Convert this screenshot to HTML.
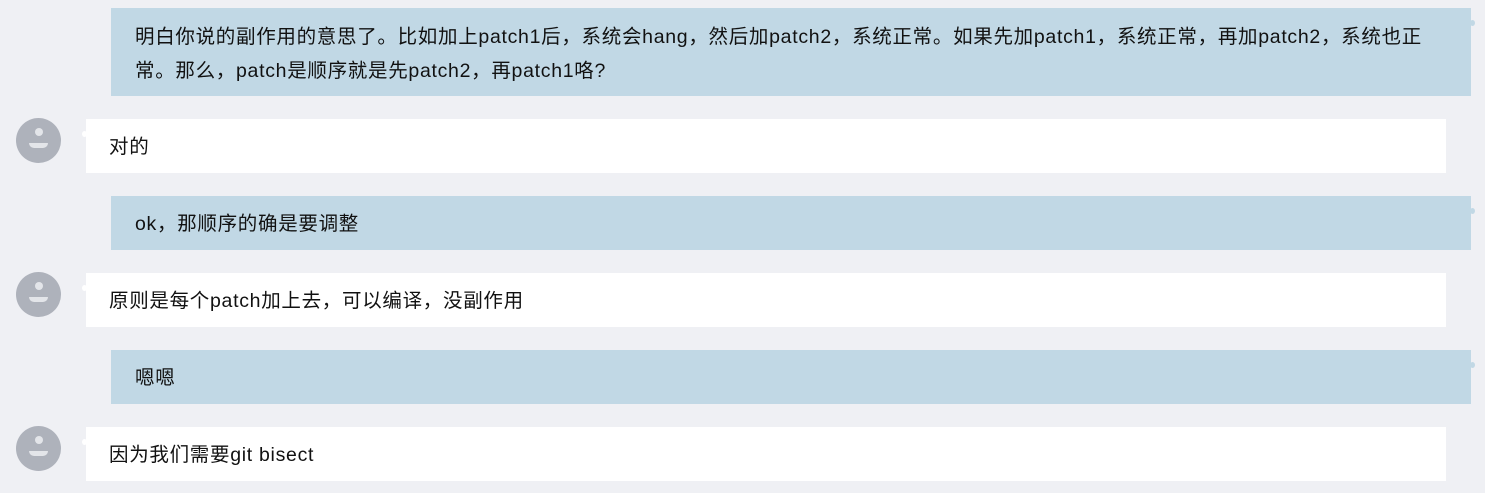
<!DOCTYPE html>
<html><head><meta charset="utf-8">
<style>
html,body{margin:0;padding:0;}
body{width:1485px;height:493px;background:#eff0f4;position:relative;overflow:hidden;
font-family:"Liberation Sans","Noto Sans CJK SC",sans-serif;font-size:19.5px;letter-spacing:0.7px;color:#111;}
.b{position:absolute;box-sizing:border-box;white-space:nowrap;}
.me{background:#c1d8e5;left:111px;width:1360px;padding-left:24px;}
.me::after{content:"";position:absolute;right:-4px;top:12px;width:5px;height:6px;border-radius:50%;background:#c1d8e5;}
.you{background:#fff;left:86px;width:1360px;padding-left:23px;}
.you::before{content:"";position:absolute;left:-4px;top:12px;width:5px;height:6px;border-radius:50%;background:#fff;}
.av{position:absolute;left:16px;width:45px;height:45px;border-radius:50%;background:#aeb2bb;overflow:hidden;}
.av::before{content:"";position:absolute;left:18.5px;top:10px;width:8px;height:8px;border-radius:50%;background:#e3e5e9;}
.av::after{content:"";position:absolute;left:13px;top:25px;width:19px;height:5px;border-radius:0 0 10px 10px;background:#e3e5e9;}
</style></head><body>
<div class="b me" style="top:8px;height:88px;line-height:34px;padding-top:12px;">明白你说的副作用的意思了。比如加上patch1后，系统会hang，然后加patch2，系统正常。如果先加patch1，系统正常，再加patch2，系统也正<br>常。那么，patch是顺序就是先patch2，再patch1咯?</div>

<div class="av" style="top:118px;"></div>
<div class="b you" style="top:119px;height:54px;line-height:56px;">对的</div>

<div class="b me" style="top:196px;height:54px;line-height:56px;">ok，那顺序的确是要调整</div>

<div class="av" style="top:272px;"></div>
<div class="b you" style="top:273px;height:54px;line-height:56px;">原则是每个patch加上去，可以编译，没副作用</div>

<div class="b me" style="top:350px;height:54px;line-height:56px;">嗯嗯</div>

<div class="av" style="top:426px;"></div>
<div class="b you" style="top:427px;height:54px;line-height:56px;">因为我们需要git bisect</div>
</body></html>
